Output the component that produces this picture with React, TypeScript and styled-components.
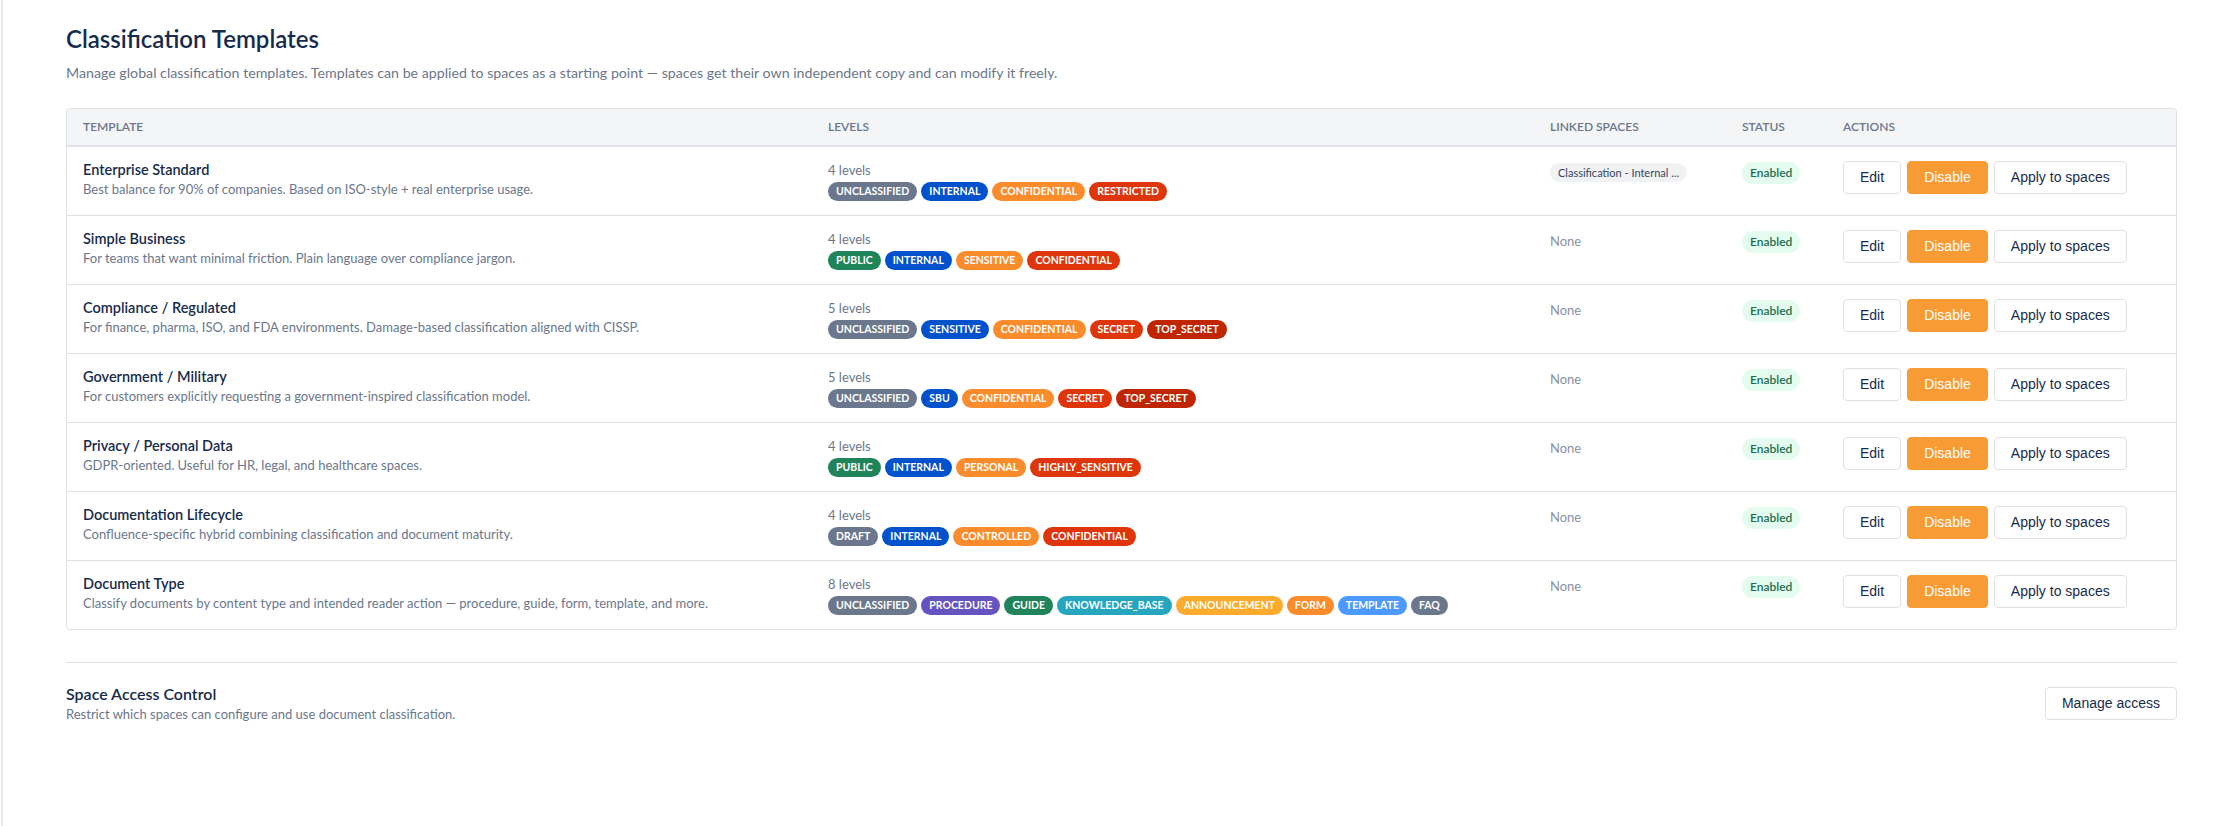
import styled, { createGlobalStyle } from 'styled-components'

const GlobalStyle = createGlobalStyle`
  html, body {
    margin: 0;
    padding: 0;
    background: #ffffff;
  }
  body {
    font-family: Lato, "Open Sans", "Liberation Sans", sans-serif;
    color: #172b4d;
  }
`

const colors = {
  gray: '#6b778c',
  blue: '#0052cc',
  orange: '#fb8c2c',
  red: '#de350b',
  darkRed: '#bf2600',
  green: '#1f845a',
  purple: '#6554c0',
  teal: '#26a5bf',
  amber: '#fcab2c',
  lightBlue: '#4c9aff',
}

type Tone = keyof typeof colors

interface Level {
  label: string
  tone: Tone
}

interface Template {
  name: string
  description: string
  levels: Level[]
  linked?: string
}

const templates: Template[] = [
  {
    name: 'Enterprise Standard',
    description: 'Best balance for 90% of companies. Based on ISO-style + real enterprise usage.',
    linked: 'Classification - Internal ...',
    levels: [
      { label: 'UNCLASSIFIED', tone: 'gray' },
      { label: 'INTERNAL', tone: 'blue' },
      { label: 'CONFIDENTIAL', tone: 'orange' },
      { label: 'RESTRICTED', tone: 'red' },
    ],
  },
  {
    name: 'Simple Business',
    description: 'For teams that want minimal friction. Plain language over compliance jargon.',
    levels: [
      { label: 'PUBLIC', tone: 'green' },
      { label: 'INTERNAL', tone: 'blue' },
      { label: 'SENSITIVE', tone: 'orange' },
      { label: 'CONFIDENTIAL', tone: 'red' },
    ],
  },
  {
    name: 'Compliance / Regulated',
    description: 'For finance, pharma, ISO, and FDA environments. Damage-based classification aligned with CISSP.',
    levels: [
      { label: 'UNCLASSIFIED', tone: 'gray' },
      { label: 'SENSITIVE', tone: 'blue' },
      { label: 'CONFIDENTIAL', tone: 'orange' },
      { label: 'SECRET', tone: 'red' },
      { label: 'TOP_SECRET', tone: 'darkRed' },
    ],
  },
  {
    name: 'Government / Military',
    description: 'For customers explicitly requesting a government-inspired classification model.',
    levels: [
      { label: 'UNCLASSIFIED', tone: 'gray' },
      { label: 'SBU', tone: 'blue' },
      { label: 'CONFIDENTIAL', tone: 'orange' },
      { label: 'SECRET', tone: 'red' },
      { label: 'TOP_SECRET', tone: 'darkRed' },
    ],
  },
  {
    name: 'Privacy / Personal Data',
    description: 'GDPR-oriented. Useful for HR, legal, and healthcare spaces.',
    levels: [
      { label: 'PUBLIC', tone: 'green' },
      { label: 'INTERNAL', tone: 'blue' },
      { label: 'PERSONAL', tone: 'orange' },
      { label: 'HIGHLY_SENSITIVE', tone: 'red' },
    ],
  },
  {
    name: 'Documentation Lifecycle',
    description: 'Confluence-specific hybrid combining classification and document maturity.',
    levels: [
      { label: 'DRAFT', tone: 'gray' },
      { label: 'INTERNAL', tone: 'blue' },
      { label: 'CONTROLLED', tone: 'orange' },
      { label: 'CONFIDENTIAL', tone: 'red' },
    ],
  },
  {
    name: 'Document Type',
    description:
      'Classify documents by content type and intended reader action — procedure, guide, form, template, and more.',
    levels: [
      { label: 'UNCLASSIFIED', tone: 'gray' },
      { label: 'PROCEDURE', tone: 'purple' },
      { label: 'GUIDE', tone: 'green' },
      { label: 'KNOWLEDGE_BASE', tone: 'teal' },
      { label: 'ANNOUNCEMENT', tone: 'amber' },
      { label: 'FORM', tone: 'orange' },
      { label: 'TEMPLATE', tone: 'lightBlue' },
      { label: 'FAQ', tone: 'gray' },
    ],
  },
]

const Page = styled.div`
  min-height: 826px;
  box-sizing: border-box;
  margin-left: 1px;
  border-left: 2px solid #e6e8ec;
  padding: 25px 62px 40px 63px;
`

const Title = styled.h1`
  margin: 0;
  font-size: 24px;
  line-height: 28px;
  font-weight: 600;
  color: #172b4d;
`

const Subtitle = styled.p`
  margin: 10px 0 0;
  font-size: 14.2px;
  line-height: 20px;
  color: #6b778c;
`

const TableWrap = styled.div`
  margin-top: 25px;
  border: 1px solid #dfe1e6;
  border-radius: 4px;
  overflow: hidden;
`

const Table = styled.table`
  width: 100%;
  border-collapse: collapse;
  table-layout: fixed;
`

const Th = styled.th`
  background: #f4f5f7;
  border-bottom: 2px solid #dfe1e6;
  padding: 9px 16px;
  text-align: left;
  font-size: 12px;
  line-height: 18px;
  font-weight: 600;
  color: #6b778c;
  text-transform: uppercase;
`

const Row = styled.tr`
  & + & td {
    border-top: 1px solid #dfe1e6;
  }
`

const Td = styled.td`
  padding: 14px 16px;
  vertical-align: top;
`

const Name = styled.div`
  font-size: 14.5px;
  line-height: 18px;
  font-weight: 600;
  color: #172b4d;
`

const Description = styled.div`
  margin-top: 2px;
  font-size: 13px;
  line-height: 17px;
  color: #6b778c;
`

const LevelCount = styled.div`
  font-size: 13px;
  line-height: 18px;
  color: #6b778c;
`

const Badges = styled.div`
  margin-top: 3px;
  display: flex;
  flex-wrap: wrap;
  gap: 4px;
`

const Badge = styled.span<{ $tone: Tone }>`
  display: inline-block;
  height: 19px;
  box-sizing: border-box;
  padding: 2px 8px;
  border-radius: 10px;
  background: ${(p) => colors[p.$tone]};
  color: #ffffff;
  font-size: 10.5px;
  line-height: 15px;
  font-weight: 700;
`

const LinkedPill = styled.span`
  display: inline-block;
  padding: 2px 8px;
  border-radius: 10px;
  background: #f1f2f4;
  color: #344563;
  font-size: 11px;
  line-height: 15px;
`

const Muted = styled.span`
  font-size: 13px;
  line-height: 18px;
  color: #8993a4;
`

const StatusPill = styled.span`
  display: inline-block;
  padding: 3px 8px;
  border-radius: 11px;
  background: #e3fcef;
  color: #216e4e;
  font-size: 12px;
  line-height: 16px;
  font-weight: 600;
`

const Actions = styled.div`
  display: flex;
  gap: 6px;
`

const Button = styled.button<{ $primary?: boolean }>`
  font-family: "Liberation Sans", Arial, sans-serif;
  font-size: 14px;
  line-height: 17px;
  padding: 7px 16px;
  border-radius: 4px;
  border: 1px solid ${(p) => (p.$primary ? '#f99b35' : '#dfe1e6')};
  background: ${(p) => (p.$primary ? '#f99b35' : '#ffffff')};
  color: ${(p) => (p.$primary ? '#ffffff' : '#172b4d')};
  cursor: pointer;
  white-space: nowrap;
`

const Divider = styled.hr`
  margin: 32px 0 0;
  border: 0;
  border-top: 1px solid #dfe1e6;
`

const AccessSection = styled.div`
  padding-top: 21px;
  display: flex;
  align-items: center;
  justify-content: space-between;
`

const SectionTitle = styled.div`
  font-size: 16px;
  line-height: 20px;
  font-weight: 600;
  color: #172b4d;
`

const SectionText = styled.div`
  margin-top: 2px;
  font-size: 13px;
  line-height: 17px;
  color: #6b778c;
`

export default function App() {
  return (
    <>
      <GlobalStyle />
      <Page>
        <Title>Classification Templates</Title>
        <Subtitle>
          Manage global classification templates. Templates can be applied to spaces as a starting point — spaces get
          their own independent copy and can modify it freely.
        </Subtitle>

        <TableWrap>
          <Table>
            <colgroup>
              <col style={{ width: 745 }} />
              <col style={{ width: 722 }} />
              <col style={{ width: 192 }} />
              <col style={{ width: 101 }} />
              <col />
            </colgroup>
            <thead>
              <tr>
                <Th>Template</Th>
                <Th>Levels</Th>
                <Th>Linked spaces</Th>
                <Th>Status</Th>
                <Th>Actions</Th>
              </tr>
            </thead>
            <tbody>
              {templates.map((t) => (
                <Row key={t.name}>
                  <Td>
                    <Name>{t.name}</Name>
                    <Description>{t.description}</Description>
                  </Td>
                  <Td>
                    <LevelCount>{t.levels.length} levels</LevelCount>
                    <Badges>
                      {t.levels.map((l) => (
                        <Badge key={l.label} $tone={l.tone}>
                          {l.label}
                        </Badge>
                      ))}
                    </Badges>
                  </Td>
                  <Td>{t.linked ? <LinkedPill>{t.linked}</LinkedPill> : <Muted>None</Muted>}</Td>
                  <Td>
                    <StatusPill>Enabled</StatusPill>
                  </Td>
                  <Td>
                    <Actions>
                      <Button>Edit</Button>
                      <Button $primary>Disable</Button>
                      <Button>Apply to spaces</Button>
                    </Actions>
                  </Td>
                </Row>
              ))}
            </tbody>
          </Table>
        </TableWrap>

        <Divider />
        <AccessSection>
          <div>
            <SectionTitle>Space Access Control</SectionTitle>
            <SectionText>Restrict which spaces can configure and use document classification.</SectionText>
          </div>
          <Button>Manage access</Button>
        </AccessSection>
      </Page>
    </>
  )
}
